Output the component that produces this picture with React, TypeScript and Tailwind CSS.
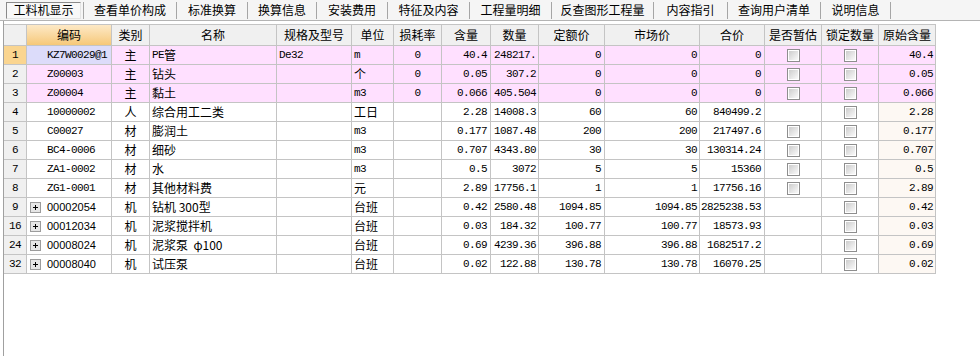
import React from "react";

const COLS =
  "grid-cols-[23px_85px_38px_127px_75px_42px_48px_49px_48px_66px_95px_65px_57px_57px_57px]";

const CJK = "font-[family-name:Noto_Sans_CJK_SC,sans-serif] text-[12px]";
const MONO =
  "font-[family-name:Liberation_Mono,Noto_Sans_CJK_SC,monospace] text-[11px] tracking-[-0.6px]";
const SANS = "font-[family-name:Liberation_Sans,Noto_Sans_CJK_SC,sans-serif] text-[11px]";

const TABS = [
  { label: "工料机显示", w: "w-[84px]" },
  { label: "查看单价构成", w: "w-[93px]" },
  { label: "标准换算", w: "w-[71px]" },
  { label: "换算信息", w: "w-[69px]" },
  { label: "安装费用", w: "w-[71px]" },
  { label: "特征及内容", w: "w-[82px]" },
  { label: "工程量明细", w: "w-[82px]" },
  { label: "反查图形工程量", w: "w-[102px]" },
  { label: "内容指引", w: "w-[74px]" },
  { label: "查询用户清单", w: "w-[93px]" },
  { label: "说明信息", w: "w-[70px]" },
];

const HEADERS = [
  "",
  "编码",
  "类别",
  "名称",
  "规格及型号",
  "单位",
  "损耗率",
  "含量",
  "数量",
  "定额价",
  "市场价",
  "合价",
  "是否暂估",
  "锁定数量",
  "原始含量",
];

type Row = {
  n: string;
  code: string;
  exp?: boolean;
  kind: string;
  name: string;
  spec?: string;
  unit: string;
  loss?: string;
  qty: string;
  amount: string;
  quota: string;
  market: string;
  total: string;
  est: boolean;
  main?: boolean;
};

const ROWS: Row[] = [
  { n: "1", code: "KZ7W0029@1", kind: "主", name: "PE管", spec: "De32", unit: "m", loss: "0", qty: "40.4", amount: "248217.", quota: "0", market: "0", total: "0", est: true, main: true },
  { n: "2", code: "Z00003", kind: "主", name: "钻头", unit: "个", loss: "0", qty: "0.05", amount: "307.2", quota: "0", market: "0", total: "0", est: true, main: true },
  { n: "3", code: "Z00004", kind: "主", name: "黏土", unit: "m3", loss: "0", qty: "0.066", amount: "405.504", quota: "0", market: "0", total: "0", est: true, main: true },
  { n: "4", code: "10000002", kind: "人", name: "综合用工二类", unit: "工日", qty: "2.28", amount: "14008.3", quota: "60", market: "60", total: "840499.2", est: false },
  { n: "5", code: "C00027", kind: "材", name: "膨润土", unit: "m3", qty: "0.177", amount: "1087.48", quota: "200", market: "200", total: "217497.6", est: true },
  { n: "6", code: "BC4-0006", kind: "材", name: "细砂", unit: "m3", qty: "0.707", amount: "4343.80", quota: "30", market: "30", total: "130314.24", est: true },
  { n: "7", code: "ZA1-0002", kind: "材", name: "水", unit: "m3", qty: "0.5", amount: "3072", quota: "5", market: "5", total: "15360", est: true },
  { n: "8", code: "ZG1-0001", kind: "材", name: "其他材料费", unit: "元", qty: "2.89", amount: "17756.1", quota: "1", market: "1", total: "17756.16", est: true },
  { n: "9", code: "00002054", exp: true, kind: "机", name: "钻机 300型", unit: "台班", qty: "0.42", amount: "2580.48", quota: "1094.85", market: "1094.85", total: "2825238.53", est: false },
  { n: "16", code: "00012034", exp: true, kind: "机", name: "泥浆搅拌机", unit: "台班", qty: "0.03", amount: "184.32", quota: "100.77", market: "100.77", total: "18573.93", est: false },
  { n: "24", code: "00008024", exp: true, kind: "机", name: "泥浆泵  φ100", unit: "台班", qty: "0.69", amount: "4239.36", quota: "396.88", market: "396.88", total: "1682517.2", est: false },
  { n: "32", code: "00008040", exp: true, kind: "机", name: "试压泵", unit: "台班", qty: "0.02", amount: "122.88", quota: "130.78", market: "130.78", total: "16070.25", est: false },
];

const CELL = "flex h-[19px] items-center overflow-hidden whitespace-pre border-b border-r border-[#c4c4c4] text-black";

function Check() {
  return (
    <div className="h-[13px] w-[13px] border border-[#8e8e8e] bg-white p-px">
      <div className="h-full w-full bg-linear-to-br from-[#cdcdcd] to-[#fafafa]" />
    </div>
  );
}

function Plus() {
  return (
    <svg width="11" height="11" viewBox="0 0 11 11" className="shrink-0">
      <rect x="0.5" y="0.5" width="10" height="10" fill="#e6e6e6" stroke="#9c9c9c" />
      <path d="M3 5.5h5M5.5 3v5" stroke="#000" />
    </svg>
  );
}

function isAscii(s: string) {
  return /^[\x20-\x7e]*$/.test(s);
}

function DataRow({ r, first }: { r: Row; first: boolean }) {
  const bg = r.main ? "bg-[#ffe0ff]" : "bg-white";
  return (
    <>
      <div className={`${CELL} ${MONO} justify-center ${first ? "bg-[#fad590]" : "bg-[#f0f0f0]"}`}>{r.n}</div>
      <div className={`${CELL} ${first ? "bg-[#dcdcfa]" : bg} ${r.exp ? "pl-[3px]" : "pl-[20px]"}`}>
        {r.exp && <Plus />}
        <span className={r.exp ? `ml-[6px] ${SANS}` : MONO}>{r.code}</span>
      </div>
      <div className={`${CELL} ${CJK} ${bg} justify-center`}>{r.kind}</div>
      <div className={`${CELL} ${bg} pl-[2px] ${r.exp ? SANS : CJK}`}>
        {first ? (
          <>
            <span className={MONO}>PE</span>
            <span className={CJK}>管</span>
          </>
        ) : (
          <span className={CJK}>{r.name}</span>
        )}
      </div>
      <div className={`${CELL} ${MONO} ${bg} pl-[2px]`}>{r.spec ?? ""}</div>
      <div className={`${CELL} ${isAscii(r.unit) ? MONO : CJK} ${bg} pl-[2px]`}>{r.unit}</div>
      <div className={`${CELL} ${MONO} ${bg} justify-center`}>{r.loss ?? ""}</div>
      <div className={`${CELL} ${MONO} ${bg} justify-end pr-[3px]`}>{r.qty}</div>
      <div className={`${CELL} ${MONO} ${bg} justify-end pr-[2px]`}>{r.amount}</div>
      <div className={`${CELL} ${MONO} ${bg} justify-end pr-[3px]`}>{r.quota}</div>
      <div className={`${CELL} ${MONO} ${bg} justify-end pr-[2px]`}>{r.market}</div>
      <div className={`${CELL} ${MONO} ${bg} justify-end pr-[3px]`}>{r.total}</div>
      <div className={`${CELL} ${bg} justify-center`}>{r.est && <Check />}</div>
      <div className={`${CELL} ${bg} justify-center`}>
        <Check />
      </div>
      <div className={`${CELL} ${MONO} ${r.main ? "bg-[#ffe0ff]" : "bg-[#fdf8f3]"} justify-end pr-[2px]`}>{r.qty}</div>
    </>
  );
}

export default function App() {
  return (
    <div className="flex h-[356px] w-[980px] flex-col overflow-hidden bg-white">
      <div className={`flex h-[21px] shrink-0 items-center border-b border-[#b4b4b4] bg-[#f5f5f5] text-black ${CJK}`}>
        {TABS.map((t, i) => (
          <div key={t.label} className={`flex h-full items-center ${t.w}`}>
            <div className={`flex flex-1 ${i === 0 ? "justify-start pl-[6px]" : "justify-center"}`}>
              {i === 0 ? (
                <span className="flex h-[17px] w-[75px] items-center justify-center border border-b-[#e4e4e4] border-l-[#8a8a8a] border-r-[#e4e4e4] border-t-[#8a8a8a] bg-[#f8f8f8]">
                  {t.label}
                </span>
              ) : (
                <span>{t.label}</span>
              )}
            </div>
            <div className="h-[17px] w-px bg-[#a6a6a6]" />
          </div>
        ))}
      </div>

      <div className="ml-[3px] flex-1 border-l border-[#a0a0a0] bg-white pt-[3px]">
        <div className={`grid w-max ${COLS} border-t border-[#c4c4c4]`}>
          {HEADERS.map((h, i) => (
            <div
              key={i}
              className={`flex h-[21px] items-center justify-center border-b border-r border-[#c4c4c4] text-black ${CJK} ${
                i === 1 ? "bg-linear-to-b from-[#fde9c6] to-[#f6c878]" : "bg-[#f0f0f0]"
              }`}
            >
              {h}
            </div>
          ))}
          {ROWS.map((r, i) => (
            <DataRow key={r.n} r={r} first={i === 0} />
          ))}
        </div>
      </div>
    </div>
  );
}
